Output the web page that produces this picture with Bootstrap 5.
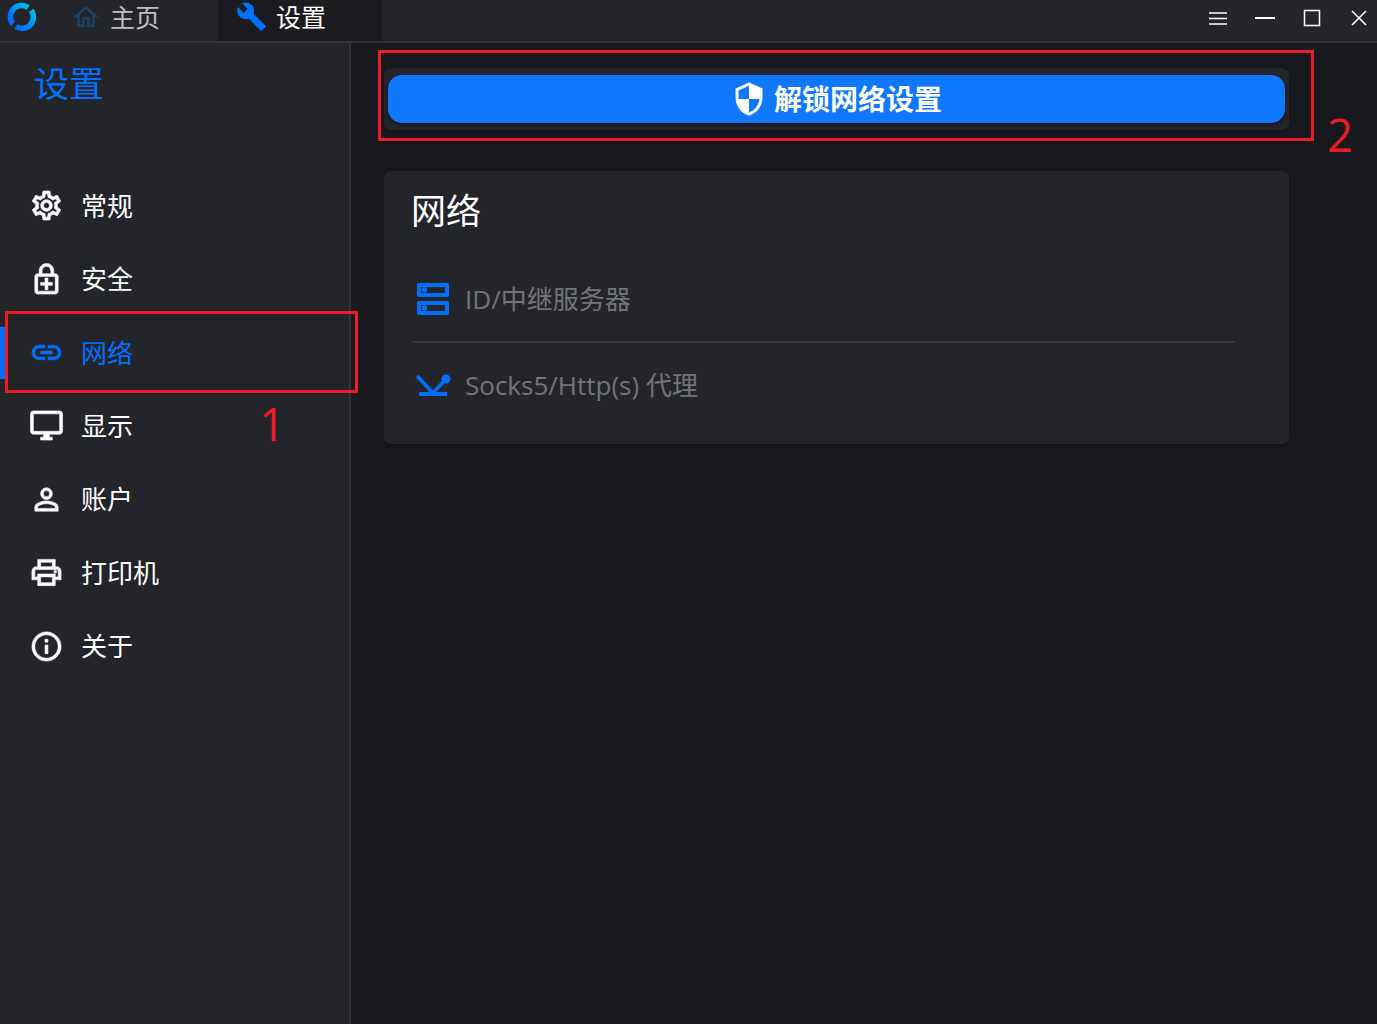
<!DOCTYPE html>
<html lang="zh-CN" data-bs-theme="dark">
<head>
<meta charset="utf-8">
<meta name="viewport" content="width=device-width, initial-scale=1">
<title>设置</title>
<link rel="stylesheet" href="https://cdn.jsdelivr.net/npm/bootstrap@5.3.0/dist/css/bootstrap.min.css">
<style>
body{background:#18191e;color:#fff;font-family:"Open Sans","Noto Sans CJK SC",sans-serif;font-size:26px;line-height:36px}
svg{display:block;flex:none;fill:currentColor}
.titlebar{background:#24252b;border-bottom:2px solid #323338;height:43px}
.app-logo{margin:0 15px 7px 7px}
.tab-link{height:41px;width:164px;padding:0 0 8px 18px;gap:9px;font-size:25px;color:#fff;text-decoration:none}
.tab-link svg{color:#0071ff}
.tab-link.tab-home{color:#bfbfbf;width:166px;padding-left:19px}
.tab-home svg{color:#1d4163}
.tab-current{background:#1c1b20}
.win-tools{margin-right:-5px}
.win-btn{width:47px;height:36px;color:#fff;background:none;border:0;padding:0}
.win-btn svg{margin:auto;fill:none;stroke:currentColor}
.sidebar{width:351px;background:#24252b;border-right:2px solid #323338}
.page-title{font-size:35px;line-height:46px;font-weight:400;color:#0071ff;margin:18px 0 62px 34px}
.side-menu{height:514px}
.side-link{color:#fff;text-decoration:none;padding-left:29px;gap:17px}
.side-link svg{stroke:currentColor;stroke-width:.4}
.side-link.current{color:#0071ff}
.side-link.current::before{content:"";position:absolute;left:0;top:50%;width:6px;height:52px;margin-top:-26px;background:#0071ff}
.main-pane{padding:25px 88px 0 33px}
.panel{background:#24252b;border-radius:7px;box-shadow:0 1px 2px #1118}
.unlock-panel{padding:7px 4px;margin-bottom:41px}
.unlock-btn{background:#0f78ff;color:#fff;border:0;border-radius:14px;height:48px;font-size:28px;font-weight:700;gap:7px;box-shadow:0 2px 3px #0008}
.net-panel{padding:17px 54px 18px 28px}
.net-title{font-size:35px;line-height:46px;font-weight:400;margin:0 0 22px -1px}
.net-row{color:#737478;text-decoration:none;height:85px;gap:13px;padding:0 0 0 2px}
.net-row + .net-row{border-top:2px solid #36373c}
.net-row svg{color:#0071ff}
.note-box{position:absolute;border:3px solid #ed1c24;pointer-events:none}
.note-num{position:absolute;color:#ed1c24;font-size:45px;line-height:46px}
.note-net{left:5px;right:-9px;top:-5px;bottom:-4px;z-index:2}
.note-one{right:64px;top:358px}
.note-unlock{left:-6px;right:-25px;top:-18px;bottom:-11px}
.note-two{right:-64px;top:44px}
</style>
</head>
<body>
<div class="d-flex flex-column min-vh-100">
<header class="titlebar d-flex align-items-center">
  <svg class="app-logo" width="30" height="30" viewBox="0 0 30 30"><defs><linearGradient id="lg" x1="0" y1="1" x2="1" y2="0"><stop offset=".2" stop-color="#0071ff"/><stop offset="1" stop-color="#00bfe8"/></linearGradient></defs><g fill="none" stroke="url(#lg)" stroke-width="5.600"><path d="M6 21.900A11.200 11.200 0 0 1 21.100 5.600"/><path d="M24.100 8.400A11.200 11.200 0 0 1 9 24.500"/></g></svg>
  <nav class="d-flex">
    <a href="#" class="tab-link tab-home d-flex align-items-center"><svg viewBox="0 0 24 24" width="30" height="30" aria-hidden="true"><path d="M12 5.690l5 4.500V18h-2v-6H9v6H7v-7.810l5-4.500M12 3L2 12h3v8h6v-6h2v6h6v-8h3L12 3z"/></svg><span>主页</span></a>
    <a href="#" class="tab-link tab-current d-flex align-items-center"><svg viewBox="0 0 24 24" width="31" height="31" aria-hidden="true"><path d="M22.700 19l-9.100-9.100c.9-2.300.4-5-1.500-6.900-2-2-5-2.400-7.400-1.300L9 6 6 9 1.600 4.700C.4 7.100.9 10.100 2.900 12.100c1.900 1.900 4.600 2.400 6.900 1.500l9.100 9.100c.4.4 1 .4 1.400 0l2.300-2.300c.5-.4.5-1.100.1-1.400z"/></svg><span>设置</span></a>
  </nav>
  <div class="win-tools d-flex ms-auto align-self-start">
    <button class="win-btn" aria-label="菜单"><svg width="18" height="14" stroke-width="1.500"><path d="M0 2h18M0 7.500h18M0 13h18"/></svg></button>
    <button class="win-btn" aria-label="最小化"><svg width="20" height="18" stroke-width="2"><path d="M0 9h20"/></svg></button>
    <button class="win-btn" aria-label="最大化"><svg width="18" height="18" stroke-width="1.500"><path d="M1.500 1.500h15v15h-15z"/></svg></button>
    <button class="win-btn" aria-label="关闭"><svg width="16" height="16" stroke-width="1.700"><path d="M1 1l14 14M15 1L1 15"/></svg></button>
  </div>
</header>
<div class="d-flex flex-fill">
  <aside class="sidebar position-relative flex-shrink-0">
    <h1 class="page-title">设置</h1>
    <nav class="side-menu d-flex flex-column">
      <a href="#" class="side-link d-flex align-items-center flex-fill"><svg viewBox="0 0 24 24" width="35" height="35" aria-hidden="true"><path d="M19.430 12.980c.04-.32.07-.64.07-.98 0-.34-.03-.66-.07-.98l2.110-1.650c.19-.15.24-.42.12-.64l-2-3.460c-.09-.16-.26-.25-.44-.25-.06 0-.12.01-.17.03l-2.490 1c-.52-.4-1.080-.73-1.690-.98l-.38-2.650C14.460 2.180 14.250 2 14 2h-4c-.25 0-.46.18-.49.42l-.38 2.650c-.61.25-1.170.59-1.690.98l-2.490-1c-.06-.02-.12-.03-.18-.03-.17 0-.34.09-.43.25l-2 3.460c-.13.22-.07.49.12.64l2.110 1.650c-.04.32-.07.65-.07.98 0 .33.03.66.07.98l-2.110 1.650c-.19.15-.24.42-.12.64l2 3.460c.09.16.26.25.44.25.06 0 .12-.01.17-.03l2.490-1c.52.4 1.080.73 1.690.98l.38 2.650c.03.24.24.42.49.42h4c.25 0 .46-.18.49-.42l.38-2.650c.61-.25 1.170-.59 1.690-.98l2.490 1c.06.02.12.03.18.03.17 0 .34-.09.43-.25l2-3.460c.12-.22.07-.49-.12-.64l-2.110-1.650zm-1.980-1.710c.04.31.05.52.05.73 0 .21-.02.43-.05.73l-.14 1.130.89.7 1.080.84-.7 1.210-1.270-.51-1.040-.42-.9.68c-.43.32-.84.56-1.250.73l-1.060.43-.16 1.130-.2 1.350h-1.400l-.19-1.350-.16-1.130-1.060-.43c-.43-.18-.83-.41-1.230-.71l-.91-.7-1.060.43-1.270.51-.7-1.210 1.080-.84.89-.7-.14-1.130c-.03-.31-.05-.54-.05-.74s.02-.43.05-.73l.14-1.130-.89-.7-1.080-.84.7-1.210 1.270.51 1.040.42.9-.68c.43-.32.84-.56 1.250-.73l1.060-.43.16-1.130.2-1.350h1.390l.19 1.350.16 1.130 1.060.43c.43.18.83.41 1.230.71l.91.7 1.060-.43 1.270-.51.7 1.210-1.070.85-.89.7.14 1.130zM12 8c-2.210 0-4 1.790-4 4s1.790 4 4 4 4-1.790 4-4-1.790-4-4-4zm0 6c-1.100 0-2-.9-2-2s.9-2 2-2 2 .9 2 2-.9 2-2 2z"/></svg><span>常规</span></a>
      <a href="#" class="side-link d-flex align-items-center flex-fill"><svg viewBox="0 0 24 24" width="35" height="35" aria-hidden="true"><path d="M18 8h-1V6c0-2.760-2.240-5-5-5S7 3.240 7 6v2H6c-1.100 0-2 .9-2 2v10c0 1.100.9 2 2 2h12c1.100 0 2-.9 2-2V10c0-1.100-.9-2-2-2zM9 6c0-1.660 1.340-3 3-3s3 1.340 3 3v2H9V6zm9 14H6V10h12v10zm-7-1h2v-3h3v-2h-3v-3h-2v3H8v2h3z"/></svg><span>安全</span></a>
      <a href="#" class="side-link current position-relative d-flex align-items-center flex-fill"><svg viewBox="0 0 24 24" width="35" height="35" aria-hidden="true"><path d="M3.900 12c0-1.710 1.390-3.100 3.100-3.100h4V7H7c-2.760 0-5 2.240-5 5s2.240 5 5 5h4v-1.900H7c-1.710 0-3.100-1.390-3.100-3.100zM8 13h8v-2H8v2zm9-6h-4v1.900h4c1.710 0 3.100 1.390 3.100 3.100s-1.390 3.100-3.100 3.100h-4V17h4c2.760 0 5-2.240 5-5s-2.240-5-5-5z"/></svg><span>网络</span><i class="note-box note-net"></i></a>
      <a href="#" class="side-link d-flex align-items-center flex-fill"><svg viewBox="0 0 24 24" width="35" height="35" aria-hidden="true"><path d="M21 2H3c-1.100 0-2 .9-2 2v12c0 1.100.9 2 2 2h7v2H8v2h8v-2h-2v-2h7c1.100 0 2-.9 2-2V4c0-1.100-.9-2-2-2zm0 14H3V4h18v12z"/></svg><span>显示</span></a>
      <a href="#" class="side-link d-flex align-items-center flex-fill"><svg viewBox="0 0 24 24" width="35" height="35" aria-hidden="true"><path d="M12 5.900a2.100 2.100 0 1 1 0 4.200 2.100 2.100 0 0 1 0-4.200m0 9c2.970 0 6.100 1.460 6.100 2.100v1.100H5.900V17c0-.64 3.130-2.100 6.100-2.100M12 4C9.790 4 8 5.790 8 8s1.790 4 4 4 4-1.790 4-4-1.790-4-4-4zm0 9c-2.670 0-8 1.340-8 4v3h16v-3c0-2.660-5.330-4-8-4z"/></svg><span>账户</span></a>
      <a href="#" class="side-link d-flex align-items-center flex-fill"><svg viewBox="0 0 24 24" width="35" height="35" aria-hidden="true"><path d="M19 8h-1V3H6v5H5c-1.660 0-3 1.340-3 3v6h4v4h12v-4h4v-6c0-1.660-1.340-3-3-3zM8 5h8v3H8V5zm8 12v2H8v-4h8v2zm2-2v-2H6v2H4v-4c0-.55.45-1 1-1h14c.55 0 1 .45 1 1v4h-2z"/><circle cx="18" cy="11.500" r="1"/></svg><span>打印机</span></a>
      <a href="#" class="side-link d-flex align-items-center flex-fill"><svg viewBox="0 0 24 24" width="35" height="35" aria-hidden="true"><path d="M11 7h2v2h-2zm0 4h2v6h-2zm1-9C6.480 2 2 6.480 2 12s4.480 10 10 10 10-4.480 10-10S17.520 2 12 2zm0 18c-4.410 0-8-3.590-8-8s3.590-8 8-8 8 3.590 8 8-3.590 8-8 8z"/></svg><span>关于</span></a>
    </nav>
    <span class="note-num note-one">1</span>
  </aside>
  <main class="main-pane flex-fill">
    <section class="panel unlock-panel position-relative">
      <button class="unlock-btn w-100 d-flex align-items-center justify-content-center"><svg viewBox="0 0 24 24" width="36" height="36" aria-hidden="true"><path d="M12 1L3 5v6c0 5.550 3.840 10.740 9 12 5.160-1.260 9-6.450 9-12V5l-9-4zm0 10.990h7c-.53 4.120-3.280 7.790-7 8.940V12H5V6.300l7-3.110v8.800z"/></svg><span>解锁网络设置</span></button>
      <i class="note-box note-unlock"></i>
      <span class="note-num note-two">2</span>
    </section>
    <section class="panel net-panel">
      <h2 class="net-title">网络</h2>
      <a href="#" class="net-row d-flex align-items-center"><svg viewBox="0 0 38 38" width="38" height="38" aria-hidden="true"><g fill="none" stroke="currentColor" stroke-width="4" stroke-linejoin="round"><path d="M5 5h28v10H5zM5 23h28v10H5z"/></g><circle cx="10.500" cy="10" r="2.700"/><circle cx="10.500" cy="28" r="2.700"/></svg><span>ID/中继服务器</span></a>
      <a href="#" class="net-row d-flex align-items-center"><svg viewBox="0 0 38 38" width="38" height="38" aria-hidden="true"><path d="M5 26h28v4H5z"/><path d="M3 10l16 17L32 13" fill="none" stroke="currentColor" stroke-width="3.500"/><circle cx="32" cy="13" r="4.500"/></svg><span>Socks5/Http(s) 代理</span></a>
    </section>
  </main>
</div>
</div>
<script src="https://cdn.jsdelivr.net/npm/bootstrap@5.3.0/dist/js/bootstrap.bundle.min.js"></script>
</body>
</html>
